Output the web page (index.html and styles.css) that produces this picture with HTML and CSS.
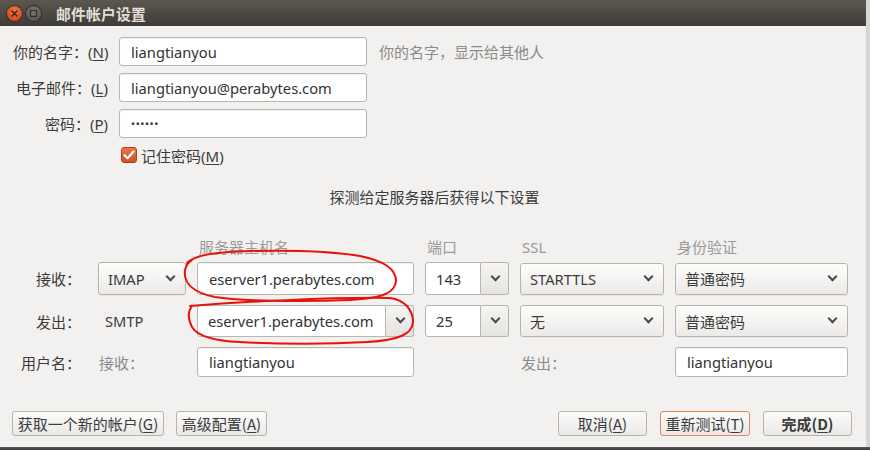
FILE: index.html
```html
<!DOCTYPE html>
<html lang="zh">
<head>
<meta charset="utf-8">
<title>邮件帐户设置</title>
<link rel="stylesheet" href="styles.css">
</head>
<body>
<div class="screen">
  <div class="window">
    <div class="titlebar">
      <span class="wbtn close"><svg width="15" height="15" viewBox="0 0 15 15"><path d="M5 5 L10 10 M10 5 L5 10" stroke="#3a2a22" stroke-width="1.6" stroke-linecap="round"/></svg></span>
      <span class="wbtn mini"><svg width="15" height="15" viewBox="0 0 15 15"><rect x="4.5" y="4.5" width="6" height="6" fill="none" stroke="#2e2d2a" stroke-width="1.2"/></svg></span>
      <span class="title">邮件帐户设置</span>
    </div>
    <div class="content">
      <div class="account">
        <label class="lbl">你的名字：(<u>N</u>)</label>
        <div class="field">liangtianyou</div>
        <span class="hint">你的名字，显示给其他人</span>
        <label class="lbl">电子邮件：(<u>L</u>)</label>
        <div class="field">liangtianyou@perabytes.com</div>
        <span></span>
        <label class="lbl">密码：(<u>P</u>)</label>
        <div class="field pwd">&#8226;&#8226;&#8226;&#8226;&#8226;&#8226;</div>
        <span></span>
      </div>
      <div class="remember">
        <span class="check"><svg width="16" height="16" viewBox="0 0 16 16"><path d="M3.5 8.2 L6.6 11.2 L12.5 4.6" fill="none" stroke="#fff" stroke-width="2.2" stroke-linecap="round" stroke-linejoin="round"/></svg></span>
        <span class="cjk">记住密码(<u>M</u>)</span>
      </div>
      <div class="probe">探测给定服务器后获得以下设置</div>
      <div class="server">
        <span></span><span></span>
        <span class="head">服务器主机名</span>
        <span class="head">端口</span>
        <span class="head">SSL</span>
        <span class="head">身份验证</span>

        <span class="rlbl">接收：</span>
        <div class="select">IMAP<i class="chev"></i></div>
        <div class="field tall">eserver1.perabytes.com</div>
        <div class="combo tall"><span class="cin">143</span><span class="cbtn"><i class="chev"></i></span></div>
        <div class="select">STARTTLS<i class="chev"></i></div>
        <div class="select cjk">普通密码<i class="chev"></i></div>

        <span class="rlbl">发出：</span>
        <span class="plain">SMTP</span>
        <div class="combo"><span class="cin">eserver1.perabytes.com</span><span class="cbtn"><i class="chev"></i></span></div>
        <div class="combo"><span class="cin">25</span><span class="cbtn"><i class="chev"></i></span></div>
        <div class="select cjk">无<i class="chev"></i></div>
        <div class="select cjk">普通密码<i class="chev"></i></div>

        <span class="rlbl">用户名：</span>
        <span class="sub">接收：</span>
        <div class="field">liangtianyou</div>
        <span></span>
        <span class="sub">发出：</span>
        <div class="field">liangtianyou</div>
      </div>
      <div class="footer">
        <button class="btn wide">获取一个新的帐户(<u>G</u>)</button>
        <button class="btn adv">高级配置(<u>A</u>)</button>
        <span class="spacer"></span>
        <button class="btn fixed">取消(<u>A</u>)</button>
        <button class="btn fixed focus">重新测试(<u>T</u>)</button>
        <button class="btn fixed bold">完成(<u>D</u>)</button>
      </div>
    </div>
    <svg class="marks" width="866" height="447" viewBox="0 0 866 447">
      <path d="M187 263 C195 255 215 252 250 251 C290 250 330 251 360 256 C385 261 396 270 396 281 C395 292 385 298 350 300 C300 302 240 301 215 297 C195 293 183 284 185 270 C186 266 188 262 192 260" fill="none" stroke="#e8120c" stroke-width="2" stroke-linecap="round"/>
      <path d="M190 306 C240 302 330 297 390 298 C405 300 413 310 413 322 C412 334 400 340 367 342 C330 344 280 344 240 342 C215 341 198 337 192 327 C188 319 188 311 192 306" fill="none" stroke="#e8120c" stroke-width="2" stroke-linecap="round"/>
    </svg>
  </div>
  <div class="edge"></div>
</div>
</body>
</html>
```

FILE: styles.css
```css
* { box-sizing: border-box; }
html, body { margin: 0; padding: 0; }
body {
  width: 870px;
  height: 450px;
  overflow: hidden;
  background: #d6d6d4;
  font-family: "Noto Sans", "Noto Sans CJK SC", sans-serif;
  font-size: 14.7px;
  color: #3c3c3c;
}
u { text-decoration: underline; text-underline-offset: 2px; }
.cjk, .lbl, .hint, .probe, .head, .rlbl, .sub { font-size: 15px; }
.screen {
  display: flex;
  flex-direction: column;
  width: 870px;
  height: 450px;
}
.window {
  position: relative;
  width: 866px;
  height: 447px;
  background: #f2f1f0;
  display: flex;
  flex-direction: column;
}
.edge {
  height: 3px;
  background: linear-gradient(#5a5a58, #3a3a38);
}
.titlebar {
  height: 26px;
  flex: none;
  background: linear-gradient(#5b5750, #3e3c38);
  display: flex;
  align-items: center;
  padding-left: 7px;
  gap: 4px;
}
.wbtn {
  width: 15px;
  height: 15px;
  border-radius: 50%;
  display: flex;
}
.close {
  background: radial-gradient(circle at 50% 35%, #f37a4a, #dc4a1e 70%, #b83a14);
  box-shadow: 0 0 0 1px #3a2f28;
}
.mini {
  background: radial-gradient(circle at 50% 35%, #7a7770, #5e5b55 70%, #4d4a45);
  box-shadow: 0 0 0 1px #2f2d2a;
}
.title {
  margin-left: 11px;
  color: #e2ded5;
  font-weight: bold;
  font-size: 14.8px;
  font-family: "Noto Sans CJK SC", sans-serif;
  letter-spacing: 0.2px;
}
.content {
  flex: 1;
  display: flex;
  flex-direction: column;
  padding: 11px 14px 11px 13px;
}
.account {
  display: grid;
  grid-template-columns: 95px 248px auto;
  column-gap: 11px;
  row-gap: 7px;
  align-items: center;
}
.lbl {
  text-align: right;
  white-space: nowrap;
}
.hint { color: #8a8a8a; margin-left: 1px; }
.field {
  height: 29px;
  background: #fff;
  border: 1px solid #b9b6b1;
  border-radius: 3px;
  box-shadow: inset 0 1px 1px rgba(0,0,0,0.06);
  padding: 0 11px;
  display: flex;
  align-items: center;
  color: #333;
  white-space: nowrap;
  overflow: hidden;
}
.field.tall { height: 33px; }
.pwd { font-size: 11px; letter-spacing: 0.5px; }
.remember {
  display: flex;
  align-items: center;
  gap: 4px;
  margin: 9px 0 0 108px;
  height: 16px;
}
.check {
  width: 16px;
  height: 16px;
  border-radius: 3px;
  background: linear-gradient(#e8784c, #cf5224);
  border: 1px solid #a8431d;
  display: flex;
  align-items: center;
  justify-content: center;
}
.check svg { margin: -1px; }
.probe {
  margin-top: 24px;
  text-align: center;
  line-height: 20px;
  padding-left: 4px;
}
.server {
  margin-top: 30px;
  margin-left: -13px;
  display: grid;
  grid-template-columns: 87px 88px 217px 84px 144px 173px;
  column-gap: 11px;
  row-gap: 10px;
  align-items: center;
}
.server .head {
  color: #9a9a9a;
  line-height: 20px;
  margin-bottom: -5px;
  padding-left: 2px;
}
.rlbl {
  text-align: right;
  padding-right: 6px;
  white-space: nowrap;
}
.sub { color: #8a8a8a; padding-left: 1px; }
.plain { padding-left: 7px; }
.select {
  position: relative;
  height: 32px;
  border: 1px solid #b7b4af;
  border-radius: 3px;
  background: linear-gradient(#fdfdfc, #eceae8);
  box-shadow: 0 1px 0 rgba(0,0,0,0.04);
  display: flex;
  align-items: center;
  padding: 0 9px;
  color: #3c3c3c;
  white-space: nowrap;
}
.server > .select:nth-child(8) { height: 33px; }
.chev {
  position: absolute;
  right: 11px;
  top: 50%;
  width: 7px;
  height: 7px;
  margin-top: -6px;
  border-right: 2px solid #4a4a4a;
  border-bottom: 2px solid #4a4a4a;
  transform: rotate(45deg);
}
.combo {
  height: 32px;
  display: flex;
}
.combo.tall { height: 33px; }
.cin {
  flex: 1;
  background: #fff;
  border: 1px solid #b9b6b1;
  border-radius: 3px 0 0 3px;
  display: flex;
  align-items: center;
  padding: 0 10px;
  color: #333;
  white-space: nowrap;
  overflow: hidden;
}
.cbtn {
  position: relative;
  width: 28px;
  flex: none;
  border: 1px solid #b7b4af;
  border-left: none;
  border-radius: 0 3px 3px 0;
  background: linear-gradient(#f6f5f4, #e6e4e2);
}
.cbtn .chev { right: 9px; }
.server > .field:last-child,
.server > .field:nth-last-child(4) { height: 30px; }
.footer {
  margin-top: auto;
  display: flex;
  align-items: center;
  gap: 13px;
  margin-left: -1px;
}
.spacer { flex: 1; }
.btn {
  height: 25px;
  font: inherit;
  font-size: 15px;
  font-family: "Noto Sans CJK SC", sans-serif;
  color: #3c3c3c;
  border: 1px solid #b7b4af;
  border-radius: 3px;
  background: linear-gradient(#fbfbfa, #ebe9e7);
  padding: 0;
  display: flex;
  align-items: center;
  justify-content: center;
  white-space: nowrap;
}
.btn.wide { width: 152px; margin-right: -1px; }
.btn.adv { width: 91px; }
.btn.fixed { width: 89px; }
.btn.focus { border-color: #e2865e; width: 90px; }
.btn.bold { font-weight: bold; }
.marks {
  position: absolute;
  left: 0;
  top: 0;
  pointer-events: none;
}
```
